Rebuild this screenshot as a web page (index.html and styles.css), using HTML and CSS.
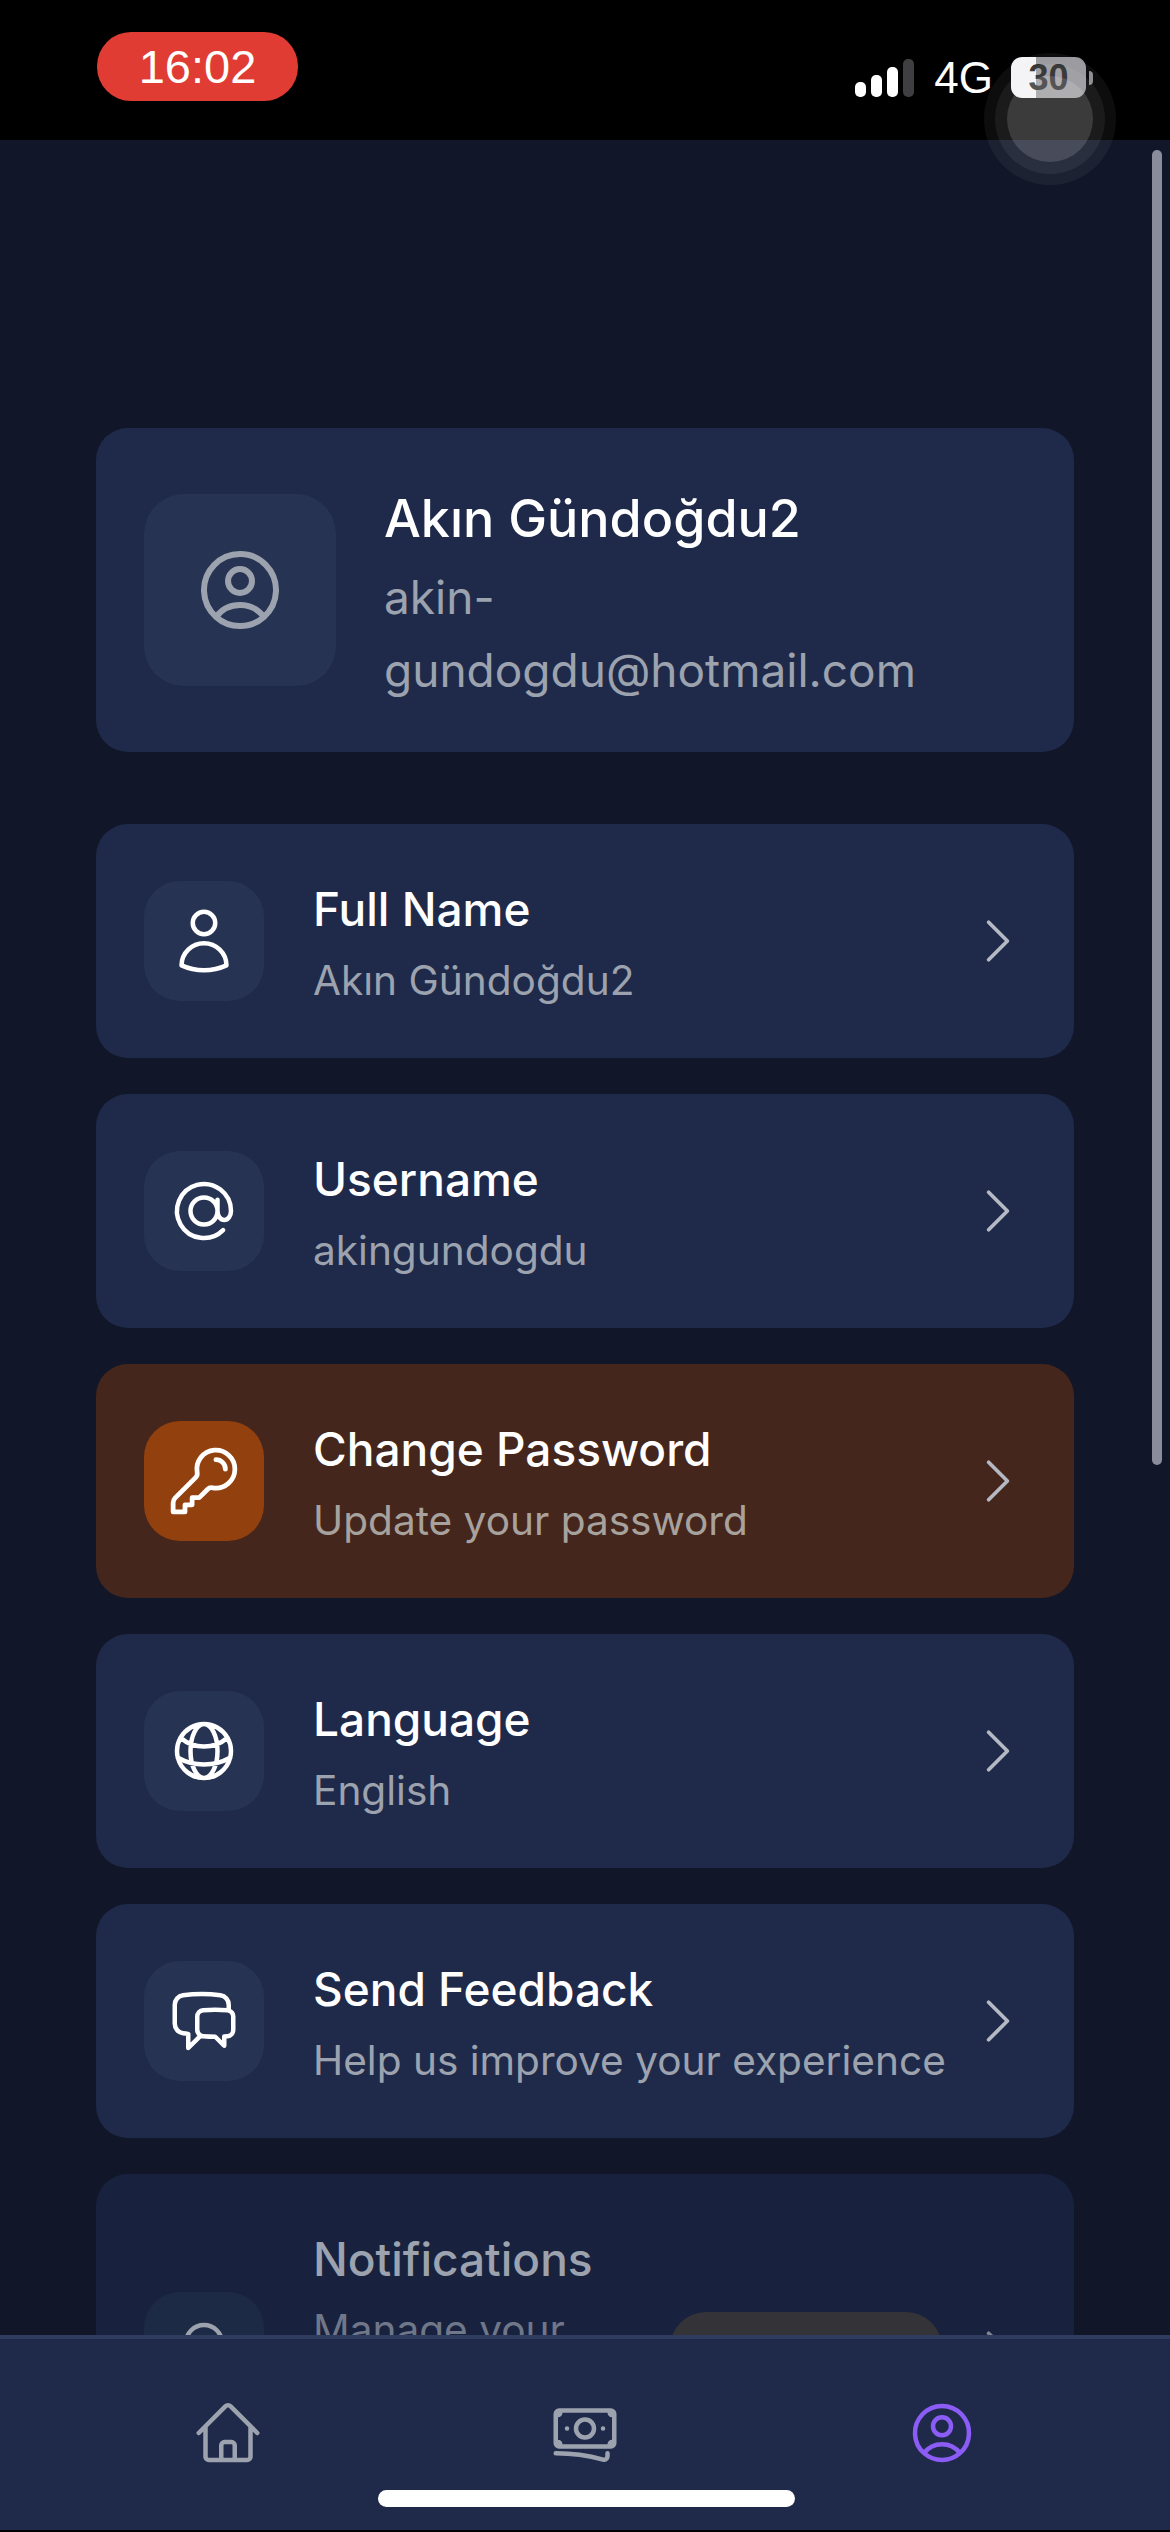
FILE: index.html
```html
<!DOCTYPE html>
<html lang="en">

<head>
  <meta charset="UTF-8"/>
  <title>Profile</title>

  <link rel="stylesheet" href="styles.css">
</head>

<body>
<div class="screen">
  <div class="status">
    <div class="time">16:02</div>
    <div class="status-right">
      <div class="signal">
        <span class="bar bar1"></span>
        <span class="bar bar2"></span>
        <span class="bar bar3"></span>
        <span class="bar bar4"></span>
      </div>
      <div class="network">4G</div>
      <div class="battery">30</div>
      <div class="battery-nub"></div>
    </div>
  </div>

  <div class="content">
    <div class="profile">
      <div class="profile-icon">
        <svg class="icon-profile" viewBox="0 0 24 24"><path d="M17.982 18.725A7.488 7.488 0 0012 15.75a7.488 7.488 0 00-5.982 2.975m11.963 0a9 9 0 10-11.963 0m11.963 0A8.966 8.966 0 0112 21a8.966 8.966 0 01-5.982-2.275M15 9.75a3 3 0 11-6 0 3 3 0 016 0z"/></svg>
      </div>
      <div class="profile-text">
        <div class="profile-name">Akın Gündoğdu2</div>
        <div class="profile-mail">akin-gundogdu@hotmail.com</div>
      </div>
    </div>

    <div class="row">
      <div class="row-icon">
        <svg class="icon" viewBox="0 0 24 24"><path d="M15.75 6a3.75 3.75 0 11-7.5 0 3.75 3.75 0 017.5 0zM4.501 20.118a7.5 7.5 0 0114.998 0A17.933 17.933 0 0112 21.75c-2.676 0-5.216-.584-7.499-1.632z"/></svg>
      </div>
      <div class="row-text">
        <div class="row-title">Full Name</div>
        <div class="row-sub">Akın Gündoğdu2</div>
      </div>
      <svg class="chevron" viewBox="0 0 24 24"><path d="M8.25 4.5l7.5 7.5-7.5 7.5"/></svg>
    </div>

    <div class="row">
      <div class="row-icon">
        <svg class="icon" viewBox="0 0 24 24"><path d="M16.5 12a4.5 4.5 0 11-9 0 4.5 4.5 0 019 0zm0 0c0 1.657 1.007 3 2.25 3S21 13.657 21 12a9 9 0 10-2.636 6.364M16.5 12V8.25"/></svg>
      </div>
      <div class="row-text">
        <div class="row-title">Username</div>
        <div class="row-sub">akingundogdu</div>
      </div>
      <svg class="chevron" viewBox="0 0 24 24"><path d="M8.25 4.5l7.5 7.5-7.5 7.5"/></svg>
    </div>

    <div class="row row-warn">
      <div class="row-icon">
        <svg class="icon" viewBox="0 0 24 24"><path d="M15.75 5.25a3 3 0 013 3m3 0a6 6 0 01-7.029 5.912c-.563-.097-1.159.026-1.563.43L10.5 17.25H8.25v2.25H6v2.25H2.25v-2.818c0-.597.237-1.17.659-1.591l6.499-6.499c.404-.404.527-1 .43-1.563A6 6 0 1121.75 8.25z"/></svg>
      </div>
      <div class="row-text">
        <div class="row-title">Change Password</div>
        <div class="row-sub">Update your password</div>
      </div>
      <svg class="chevron" viewBox="0 0 24 24"><path d="M8.25 4.5l7.5 7.5-7.5 7.5"/></svg>
    </div>

    <div class="row">
      <div class="row-icon">
        <svg class="icon" viewBox="0 0 24 24"><path d="M12 21a9.004 9.004 0 008.716-6.747M12 21a9.004 9.004 0 01-8.716-6.747M12 21c2.485 0 4.5-4.03 4.5-9S14.485 3 12 3m0 18c-2.485 0-4.5-4.03-4.5-9S9.515 3 12 3m0 0a8.997 8.997 0 017.843 4.582M12 3a8.997 8.997 0 00-7.843 4.582m15.686 0A11.953 11.953 0 0112 10.5c-2.998 0-5.74-1.1-7.843-2.918m15.686 0A8.959 8.959 0 0121 12c0 .778-.099 1.533-.284 2.253m0 0A17.919 17.919 0 0112 16.5c-3.162 0-6.133-.815-8.716-2.247m0 0A9.004 9.004 0 013 12c0-1.605.42-3.113 1.157-4.418"/></svg>
      </div>
      <div class="row-text">
        <div class="row-title">Language</div>
        <div class="row-sub">English</div>
      </div>
      <svg class="chevron" viewBox="0 0 24 24"><path d="M8.25 4.5l7.5 7.5-7.5 7.5"/></svg>
    </div>

    <div class="row">
      <div class="row-icon">
        <svg class="icon" viewBox="0 0 24 24"><path d="M20.25 8.511c.884.284 1.5 1.128 1.5 2.097v4.286c0 1.136-.847 2.1-1.98 2.193-.34.027-.68.052-1.02.072v3.091l-3-3c-1.354 0-2.694-.055-4.02-.163a2.115 2.115 0 01-.825-.242m9.345-8.334a2.126 2.126 0 00-.476-.095 48.64 48.64 0 00-8.048 0c-1.131.094-1.976 1.057-1.976 2.192v4.286c0 .837.46 1.58 1.155 1.951m9.345-8.334V6.637c0-1.621-1.152-3.026-2.76-3.235A48.455 48.455 0 0011.25 3c-2.115 0-4.198.137-6.24.402-1.608.209-2.76 1.614-2.76 3.235v6.226c0 1.621 1.152 3.026 2.76 3.235.577.075 1.157.14 1.74.194V21l4.155-4.155"/></svg>
      </div>
      <div class="row-text">
        <div class="row-title">Send Feedback</div>
        <div class="row-sub">Help us improve your experience</div>
      </div>
      <svg class="chevron" viewBox="0 0 24 24"><path d="M8.25 4.5l7.5 7.5-7.5 7.5"/></svg>
    </div>

    <div class="row row-off">
      <div class="row-icon">
        <svg class="icon" viewBox="0 0 24 24"><path d="M14.857 17.082a23.848 23.848 0 005.454-1.31A8.967 8.967 0 0118 9.75V9A6 6 0 006 9v.75a8.967 8.967 0 01-2.312 6.022c1.733.64 3.56 1.085 5.455 1.31m5.714 0a24.255 24.255 0 01-5.714 0m5.714 0a3 3 0 11-5.714 0"/></svg>
      </div>
      <div class="row-text">
        <div class="row-title">Notifications</div>
        <div class="row-sub">Manage your notification preferences</div>
      </div>
      <div class="soon"></div>
      <svg class="chevron" viewBox="0 0 24 24"><path d="M8.25 4.5l7.5 7.5-7.5 7.5"/></svg>
    </div>
  </div>

  <div class="nav">
    <div class="nav-item">
      <svg class="icon" viewBox="0 0 24 24"><path d="M2.25 12l8.954-8.955c.44-.439 1.152-.439 1.591 0L21.75 12M4.5 9.75v10.125c0 .621.504 1.125 1.125 1.125H9.75v-4.875c0-.621.504-1.125 1.125-1.125h2.25c.621 0 1.125.504 1.125 1.125V21h4.125c.621 0 1.125-.504 1.125-1.125V9.75M8.25 21h8.25"/></svg>
    </div>
    <div class="nav-item">
      <svg class="icon" viewBox="0 0 24 24"><path d="M2.25 18.75a60.07 60.07 0 0115.797 2.101c.727.198 1.453-.342 1.453-1.096V18.75M3.75 4.5v.75A.75.75 0 013 6h-.75m0 0v-.375c0-.621.504-1.125 1.125-1.125H20.25M2.25 6v9m18-10.5v.75c0 .414.336.75.75.75h.75m-1.5-1.5h.375c.621 0 1.125.504 1.125 1.125v9.75c0 .621-.504 1.125-1.125 1.125h-.375m1.5-1.5H21a.75.75 0 00-.75.75v.75m0 0H3.75m0 0h-.375a1.125 1.125 0 01-1.125-1.125V15m1.5 1.5v-.75A.75.75 0 003 15h-.75M15 10.5a3 3 0 11-6 0 3 3 0 016 0zm3 0h.008v.008H18V10.5zm-12 0h.008v.008H6V10.5z"/></svg>
    </div>
    <div class="nav-item nav-active">
      <svg class="icon" viewBox="0 0 24 24"><path d="M17.982 18.725A7.488 7.488 0 0012 15.75a7.488 7.488 0 00-5.982 2.975m11.963 0a9 9 0 10-11.963 0m11.963 0A8.966 8.966 0 0112 21a8.966 8.966 0 01-5.982-2.275M15 9.75a3 3 0 11-6 0 3 3 0 016 0z"/></svg>
    </div>
    <div class="home-bar"></div>
  </div>

  <div class="scrollbar"></div>
  <div class="touch"><div class="touch-mid"><div class="touch-in"></div></div></div>
</div>
</body>

</html>
```

FILE: styles.css
```css
body {
    margin: 0;
    background: #000;
    font-family: Inter, "Noto Sans", sans-serif;
}

svg {
    fill: none;
    stroke: currentColor;
    stroke-width: 1.5;
    stroke-linecap: round;
    stroke-linejoin: round;
    flex-shrink: 0;
}

.screen {
    position: relative;
    width: 1170px;
    height: 2532px;
    overflow: hidden;
    display: flex;
    flex-direction: column;
    background: #000;
}

/* status bar */
.status {
    height: 140px;
    flex-shrink: 0;
    display: flex;
    justify-content: space-between;
    align-items: flex-start;
    padding: 0 77px 0 97px;
    color: #fff;
}

.time {
    width: 201px;
    height: 69px;
    margin-top: 32px;
    border-radius: 34px;
    background: #e03c33;
    font-family: "Liberation Sans", sans-serif;
    font-size: 47px;
    line-height: 69px;
    text-align: center;
}

.status-right {
    display: flex;
    align-items: center;
    margin-top: 57px;
    height: 41px;
}

.signal {
    display: flex;
    align-items: flex-end;
    gap: 5px;
    height: 38px;
}

.bar {
    width: 11px;
    border-radius: 5px;
    background: #fff;
}

.bar1 { height: 15px; }
.bar2 { height: 22px; }
.bar3 { height: 30px; }
.bar4 { height: 38px; background: #3f3f42; }

.network {
    margin-left: 20px;
    font-family: "Liberation Sans", sans-serif;
    font-size: 44px;
    line-height: 41px;
}

.battery {
    width: 75px;
    height: 41px;
    margin-left: 18px;
    border-radius: 11px;
    background: linear-gradient(90deg, #f4f4f6 33%, #97979b 33%);
    color: #222;
    font-family: "Liberation Sans", sans-serif;
    font-size: 36px;
    font-weight: 700;
    line-height: 41px;
    text-align: center;
}

.battery-nub {
    width: 4px;
    height: 14px;
    margin-left: 3px;
    border-radius: 0 4px 4px 0;
    background: #8a8a8e;
}

/* list */
.content {
    flex: 1;
    min-height: 0;
    overflow: hidden;
    padding: 288px 96px 0;
    background: #111729;
}

.profile {
    display: flex;
    align-items: center;
    gap: 48px;
    height: 324px;
    box-sizing: border-box;
    padding: 0 48px;
    margin-bottom: 72px;
    border-radius: 32px;
    background: #1f2a4a;
}

.profile-icon {
    width: 192px;
    height: 192px;
    flex-shrink: 0;
    display: flex;
    align-items: center;
    justify-content: center;
    border-radius: 40px;
    background: #263352;
    color: #9ca3af;
}

.icon-profile {
    width: 96px;
    height: 96px;
}

.profile-text {
    min-width: 0;
    padding-top: 3px;
}

.profile-name {
    color: #fff;
    font-size: 52px;
    font-weight: 500;
    line-height: 84px;
}

.profile-mail {
    color: #9ca3af;
    font-size: 46px;
    line-height: 73px;
}

.row {
    display: flex;
    align-items: center;
    padding: 45px 46px 45px 48px;
    margin-bottom: 36px;
    border-radius: 32px;
    background: #1f2a4a;
    color: #fff;
}

.row-icon {
    width: 120px;
    height: 120px;
    flex-shrink: 0;
    display: flex;
    align-items: center;
    justify-content: center;
    border-radius: 36px;
    background: #263352;
}

.icon {
    width: 72px;
    height: 72px;
}

.row-warn .icon {
    width: 76px;
    height: 76px;
}

.row-text {
    flex: 1;
    min-width: 0;
    margin-left: 49px;
}

.row-title {
    font-size: 46px;
    font-weight: 500;
    line-height: 80px;
}

.row-sub {
    color: #9ca3af;
    font-size: 40.6px;
    line-height: 64px;
}

.chevron {
    width: 60px;
    height: 60px;
    color: #b4b9c4;
}

.row-warn {
    background: #45261c;
}

.row-warn .row-icon {
    background: #92400e;
}

.row-warn .row-sub {
    color: #a8a29e;
}

.row-off {
    padding-bottom: 37px;
    background: #18223e;
}

.row-off .row-icon {
    background: #1d2a45;
    color: #9ca3af;
}

.row-off .row-title {
    color: #9ca3af;
}

.row-off .row-sub {
    color: #6f7789;
    line-height: 62px;
}

.row-off .chevron {
    color: #7e8494;
}

.soon {
    width: 272px;
    height: 80px;
    flex-shrink: 0;
    margin: 0 26px 0 30px;
    border-radius: 36px;
    background: #333338;
}

/* bottom navigation */
.nav {
    position: relative;
    height: 195px;
    flex-shrink: 0;
    margin-bottom: 2px;
    box-sizing: border-box;
    display: grid;
    grid-template-columns: repeat(3, 357px);
    justify-content: center;
    padding-top: 58px;
    border-top: 4px solid #2f3b5f;
    background: #1f2a4a;
}

.nav-item {
    display: flex;
    justify-content: center;
    align-items: flex-start;
    color: #9ca3af;
}

.nav-active {
    color: #8b5cf6;
}

.home-bar {
    position: absolute;
    left: 378px;
    bottom: 23px;
    width: 417px;
    height: 17px;
    border-radius: 9px;
    background: #fff;
}

/* overlays */
.scrollbar {
    position: absolute;
    left: 1152px;
    top: 150px;
    width: 10px;
    height: 1315px;
    border-radius: 5px;
    background: #8b8c9b;
}

.touch {
    position: absolute;
    left: 984px;
    top: 53px;
    width: 132px;
    height: 132px;
    box-sizing: border-box;
    padding: 11px;
    border-radius: 50%;
    background: rgba(255, 255, 255, 0.05);
}

.touch-mid {
    height: 110px;
    box-sizing: border-box;
    padding: 12px;
    border-radius: 50%;
    background: rgba(255, 255, 255, 0.06);
}

.touch-in {
    height: 86px;
    border-radius: 50%;
    background: rgba(255, 255, 255, 0.14);
}
```
